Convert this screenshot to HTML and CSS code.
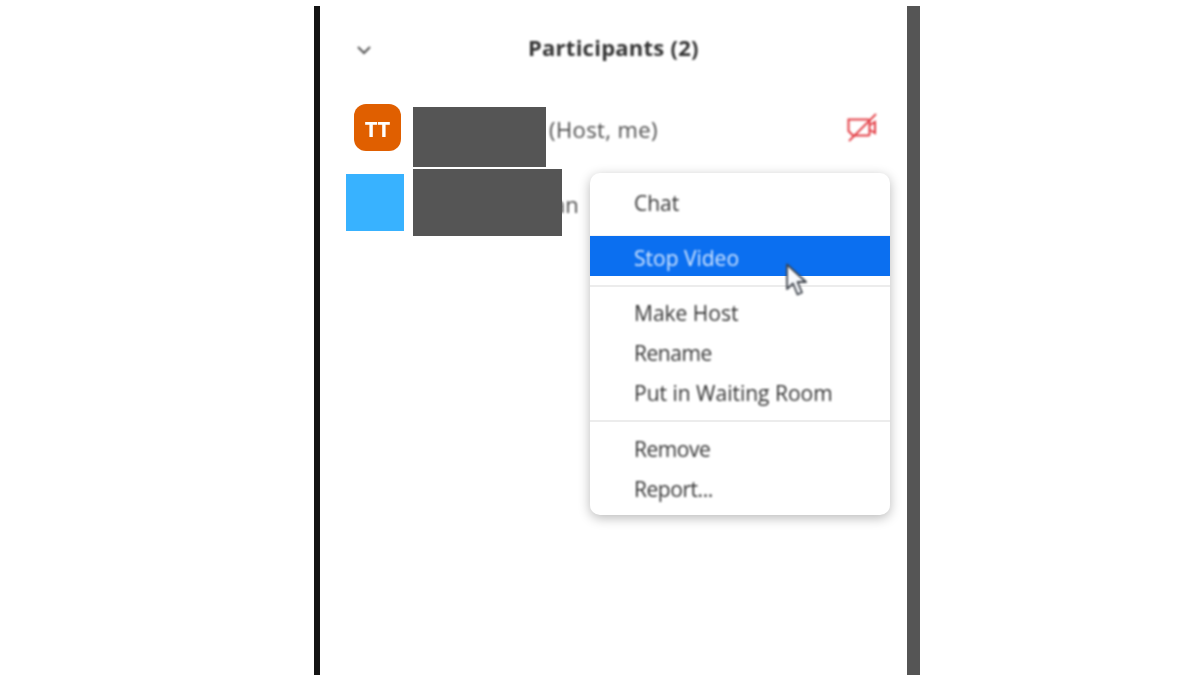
FILE: index.html
```html
<!DOCTYPE html>
<html lang="en">
<head>
<meta charset="utf-8">
<title>Participants</title>
<link rel="stylesheet" href="styles.css">
</head>
<body>
<main class="panel">
  <header class="panel-head">
    <svg class="chevron" viewBox="0 0 16 10" width="16" height="10" aria-hidden="true"><path d="M2 2 8 8l6-6" fill="none" stroke="#555" stroke-width="2"/></svg>
    <h1 class="panel-title">Participants (2)</h1>
  </header>
  <ul class="people">
    <li class="person person-host">
      <span class="avatar">TT</span>
      <span class="person-name">(Host, me)</span>
      <svg class="cam-off" viewBox="0 0 32 32" width="32" height="32" aria-hidden="true">
        <path d="M2.500 7.500H22a1.500 1.500 0 0 1 1.500 1.500v13a1.500 1.500 0 0 1-1.500 1.500H7L2.500 19z" fill="none" stroke="#e33d44" stroke-width="2"/>
        <path d="M24 13l5-3v11l-5-3" fill="none" stroke="#e33d44" stroke-width="2"/>
        <path d="M3 29 30 2" fill="none" stroke="#e33d44" stroke-width="1.800"/>
      </svg>
    </li>
    <li class="person person-guest">
      <span class="person-name">an</span>
    </li>
  </ul>
  <div class="block-blue"></div>
  <div class="block-dark block-one"></div>
  <div class="block-dark block-two"></div>
  <nav class="menu">
    <div class="menu-group menu-group-first">
      <div class="menu-item">Chat</div>
    </div>
    <div class="menu-group menu-group-active">
      <div class="menu-item menu-item-active"><span class="menu-label">Stop Video</span></div>
    </div>
    <div class="menu-group">
      <div class="menu-item">Make Host</div>
      <div class="menu-item menu-item-tight">Rename</div>
      <div class="menu-item">Put in Waiting Room</div>
    </div>
    <div class="menu-group">
      <div class="menu-item menu-item-tight">Remove</div>
      <div class="menu-item menu-item-tight">Report...</div>
    </div>
  </nav>
  <svg class="cursor" viewBox="0 0 26 36" width="26" height="36" aria-hidden="true">
    <path d="M2 1.500V26l6-5.500 4.500 11 4.500-2-4.500-10.500H21z" fill="#f8fafd" stroke="#3f444c" stroke-width="1.800" stroke-linejoin="round"/>
  </svg>
</main>
</body>
</html>
```
FILE: styles.css
```css
* { box-sizing: border-box; }
html, body { margin: 0; padding: 0; }
body {
  width: 1200px;
  height: 675px;
  overflow: hidden;
  background: #fff;
  font-family: "Open Sans", "Liberation Sans", sans-serif;
}
.panel {
  position: relative;
  width: 606px;
  height: 669px;
  margin: 6px 0 0 314px;
  border-left: 6px solid #141414;
  border-right: 13px solid #555;
  background: #fff;
}
.panel-head {
  display: flex;
  align-items: center;
  height: 84px;
  padding: 0 0 0 36px;
}
.chevron { flex: none; margin-top: 3px; filter: blur(.9px); }
.panel-title {
  margin: -2px 0 0 156px;
  font-size: 22px;
  font-weight: 700;
  line-height: 28px;
  letter-spacing: .25px;
  color: #333;
  filter: blur(.9px);
}
.people { list-style: none; margin: 0; padding: 0; }
.person {
  display: flex;
  align-items: center;
  height: 64px;
  font-size: 22px;
  color: #4d4d4d;
}
.person-host { padding-left: 34px; margin-top: 5px; }
.person-guest { padding-left: 233px; margin-top: 9px; }
.avatar {
  flex: none;
  display: flex;
  align-items: center;
  justify-content: center;
  width: 47px;
  height: 47px;
  margin-top: 1px;
  border-radius: 12px;
  background: #e05f00;
  color: #fff;
  font-size: 22px;
  font-weight: 700;
  filter: blur(.7px);
}
.person-name { filter: blur(.9px); white-space: nowrap; margin-top: 4px; }
.person-guest .person-name { margin-top: 8px; }
.person-host .person-name { margin-left: 148px; letter-spacing: .4px; }
.cam-off { flex: none; margin: 2px 0 0 188px; filter: blur(.8px); }
.block-blue {
  position: absolute;
  left: 26px;
  top: 168px;
  width: 58px;
  height: 57px;
  background: #38b2ff;
}
.block-dark { position: absolute; left: 93px; background: #555; }
.block-one { top: 101px; width: 133px; height: 60px; }
.block-two { top: 163px; width: 149px; height: 67px; }
.menu {
  position: absolute;
  left: 270px;
  top: 167px;
  width: 300px;
  height: 342px;
  border-radius: 10px;
  background: #fff;
  box-shadow: 0 3px 12px rgba(0, 0, 0, .28);
  font-size: 21px;
  color: #333;
  overflow: hidden;
}
.menu-group { padding: 6px 0 7px; border-top: 2px solid #ececec; }
.menu-group-first {
  height: 63px;
  padding: 10px 0 0;
  border-top: 0;
  border-bottom: 1px solid #f4f4f4;
}
.menu-group-active { padding: 0 0 9px; border-top: 0; }
.menu-group-active + .menu-group { padding-top: 6px; }
.menu-group-active + .menu-group + .menu-group { padding-top: 7px; }
.menu-item {
  height: 40px;
  padding-left: 44px;
  line-height: 40px;
  white-space: nowrap;
  filter: blur(.9px);
}
.menu-item-tight { letter-spacing: -.45px; }
.menu-item-active {
  background: #0b6ff0;
  color: #d4e7ff;
  line-height: 44px;
  filter: none;
}
.menu-label { display: inline-block; filter: blur(.9px); }
.cursor {
  position: absolute;
  left: 465px;
  top: 257px;
  filter: blur(.9px);
}
```
